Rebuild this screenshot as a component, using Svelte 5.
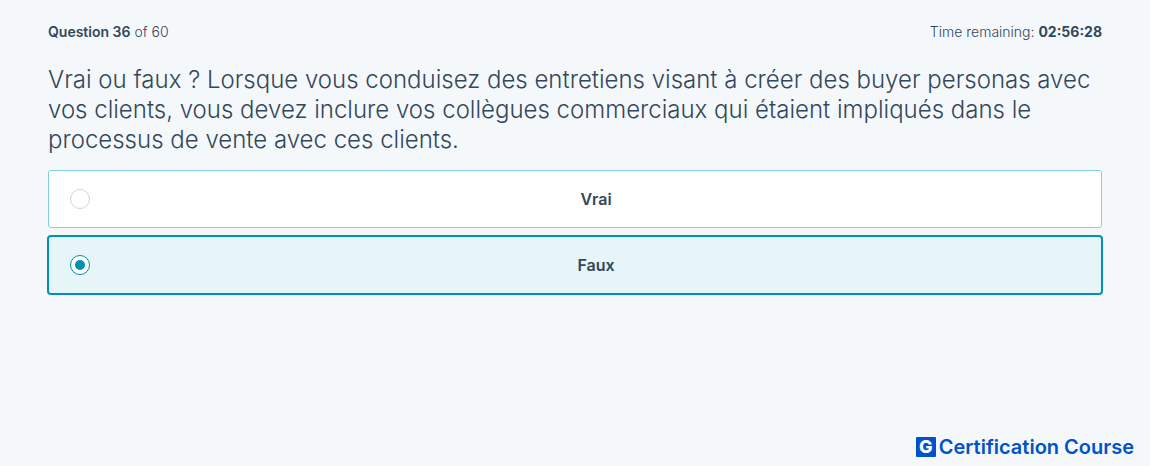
<script lang="ts">
  const current = 36;
  const total = 60;
  const remaining = "02:56:28";
  const question =
    "Vrai ou faux ? Lorsque vous conduisez des entretiens visant à créer des buyer personas avec vos clients, vous devez inclure vos collègues commerciaux qui étaient impliqués dans le processus de vente avec ces clients.";
  const answers = ["Vrai", "Faux"];

  let selected = $state("Faux");
</script>

<div class="page">
  <main>
    <header>
      <span><strong>Question {current}</strong> of {total}</span>
      <span>Time remaining: <strong class="time">{remaining}</strong></span>
    </header>

    <fieldset>
      <legend>{question}</legend>
      <div class="answers">
        {#each answers as answer}
          <label class="answer" class:selected={selected === answer}>
            <input type="radio" name="answer" value={answer} bind:group={selected} />
            <span>{answer}</span>
          </label>
        {/each}
      </div>
    </fieldset>
  </main>

  <footer>
    <span class="logo">G</span>
    <span>Certification Course</span>
  </footer>
</div>

<style>
  :global(body) {
    background: #f5f8fa;
  }
  .page {
    display: flex;
    flex-direction: column;
    min-height: 100vh;
    box-sizing: border-box;
    padding: 20px 48px 7px;
    color: #33475b;
    font-family: Inter, "Open Sans", sans-serif;
    font-weight: 300;
  }
  main {
    flex: 1;
  }
  header {
    display: flex;
    justify-content: space-between;
    margin-bottom: 21px;
    font-size: 14px;
    line-height: 24px;
  }
  strong {
    font-weight: 600;
  }
  .time {
    font-weight: 700;
  }
  fieldset {
    min-width: 0;
    margin: 0;
    padding: 0;
    border: 0;
  }
  legend {
    padding: 0;
    font-size: 24px;
    line-height: 30px;
  }
  .answers {
    display: flex;
    flex-direction: column;
    gap: 8px;
    padding-top: 15px;
  }
  .answer {
    display: flex;
    align-items: center;
    gap: 22px;
    padding: 16px 21px;
    border: 1px solid #7fd1de;
    border-radius: 3px;
    background: #fff;
    font-size: 16px;
    font-weight: 600;
    line-height: 24px;
    cursor: pointer;
  }
  .answer span {
    flex: 1;
    text-align: center;
  }
  .selected {
    border-color: #0091ae;
    background: #e5f5f8;
    box-shadow: 0 0 0 1px #0091ae;
  }
  input {
    display: grid;
    place-items: center;
    width: 20px;
    height: 20px;
    margin: 0;
    border: 1px solid #cbd6e2;
    border-radius: 50%;
    background: #fff;
    appearance: none;
  }
  input:checked {
    border-color: #0091ae;
  }
  input:checked::before {
    content: "";
    width: 10px;
    height: 10px;
    border-radius: 50%;
    background: #0091ae;
  }
  footer {
    display: flex;
    align-items: center;
    justify-content: flex-end;
    gap: 3px;
    margin-right: -32px;
    color: #0052cc;
    font-size: 20px;
    font-weight: 600;
    line-height: 24px;
  }
  .logo {
    width: 20px;
    border-radius: 1px;
    background: #0052cc;
    color: #fff;
    font-size: 18px;
    font-weight: 800;
    line-height: 20px;
    text-align: center;
  }
</style>
